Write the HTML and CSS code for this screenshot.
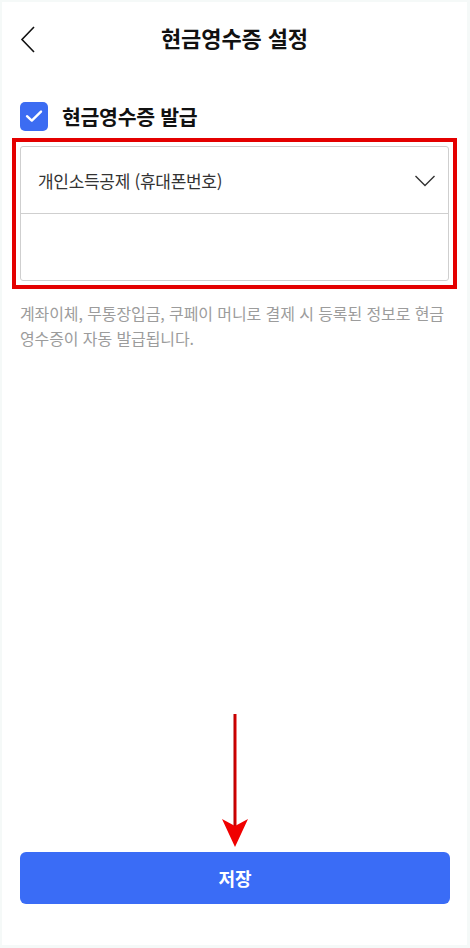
FILE: index.html
```html
<!DOCTYPE html>
<html lang="ko">
<head>
<meta charset="utf-8">
<title>현금영수증 설정</title>
<link rel="stylesheet" href="styles.css">
</head>
<body>
<div class="page">
  <header class="topbar">
    <button class="back" aria-label="뒤로">
      <svg width="20" height="30" viewBox="0 0 20 30"><path d="M14 3 L2 15.5 L14 28" fill="none" stroke="#111" stroke-width="1.6"/></svg>
    </button>
    <h1 class="title">현금영수증 설정</h1>
  </header>

  <label class="check-row">
    <span class="checkbox">
      <svg width="18" height="14" viewBox="0 0 18 14"><path d="M2 7.2 L6.8 11.6 L16 2.6" fill="none" stroke="#fff" stroke-width="2.4" stroke-linecap="round" stroke-linejoin="round"/></svg>
    </span>
    <span class="check-label">현금영수증 발급</span>
  </label>

  <div class="highlight">
    <div class="form-box">
      <div class="select-row">
        <span class="select-text">개인소득공제 (휴대폰번호)</span>
        <svg class="caret" width="22" height="14" viewBox="0 0 22 14"><path d="M1.5 2 L11 11.5 L20.5 2" fill="none" stroke="#333" stroke-width="1.4"/></svg>
      </div>
      <div class="input-row"></div>
    </div>
  </div>

  <p class="note">계좌이체, 무통장입금, 쿠페이 머니로 결제 시 등록된 정보로 현금 영수증이 자동 발급됩니다.</p>

  <button class="save">저장</button>

  <svg class="pointer" width="40" height="140" viewBox="0 0 40 140">
    <defs>
      <linearGradient id="shaft" x1="0" x2="1">
        <stop offset="0" stop-color="#b00000"/>
        <stop offset="1" stop-color="#e00000"/>
      </linearGradient>
    </defs>
    <rect x="18.5" y="0" width="3" height="116" fill="url(#shaft)"/>
    <polygon points="7,105 20,112 33,105 20,133" fill="#f00000"/>
  </svg>
</div>
</body>
</html>
```

FILE: styles.css
```css
* { box-sizing: border-box; }

html, body {
  margin: 0;
  padding: 0;
  background: #fff;
}

body {
  font-family: "Noto Sans CJK KR", "Noto Sans", sans-serif;
  color: #111;
}

.page {
  position: relative;
  width: 470px;
  height: 948px;
  border: 2px solid #f5f9f8;
  border-right-width: 3px;
  border-bottom-width: 3px;
  display: flex;
  flex-direction: column;
}

.topbar {
  position: relative;
  height: 70px;
  display: flex;
  align-items: center;
  justify-content: center;
}

.back {
  position: absolute;
  left: 18px;
  top: 22px;
  padding: 0;
  border: 0;
  background: none;
  width: 20px;
  height: 30px;
}

.back svg { display: block; }

.title {
  margin: 0;
  font-size: 22px;
  font-weight: 700;
  letter-spacing: -0.1px;
  color: #111;
}

.check-row {
  display: flex;
  align-items: center;
  gap: 14px;
  margin: 30px 0 0 18px;
  height: 28px;
}

.checkbox {
  width: 28px;
  height: 29px;
  border-radius: 5px;
  background: #3c6cf2;
  display: flex;
  align-items: center;
  justify-content: center;
}

.check-label {
  font-size: 20.5px;
  font-weight: 700;
  color: #111;
  letter-spacing: -0.3px;
}

.highlight {
  margin: 8px 10px 0 10px;
  border: 4px solid #e40000;
  padding: 4px;
}

.form-box {
  border: 1px solid #cfcfcf;
  border-radius: 3px;
}

.select-row {
  height: 67px;
  display: flex;
  align-items: center;
  justify-content: space-between;
  padding: 0 12px 0 17px;
  border-bottom: 1px solid #cfcfcf;
}

.select-text {
  font-size: 17px;
  color: #333;
  letter-spacing: -0.3px;
}

.caret { display: block; margin-top: 2px; }

.input-row {
  height: 66px;
}

.note {
  margin: 12px 6px 0 18px;
  font-size: 16px;
  line-height: 25px;
  color: #9c9c9c;
  letter-spacing: -0.1px;
  word-break: keep-all;
}

.save {
  margin: auto 17px 41px 18px;
  height: 52px;
  border: 0;
  border-radius: 6px;
  background: #3a6cf6;
  color: #fff;
  font-family: inherit;
  font-size: 18px;
  font-weight: 700;
}

.pointer {
  position: absolute;
  left: 213px;
  top: 712px;
}
```
